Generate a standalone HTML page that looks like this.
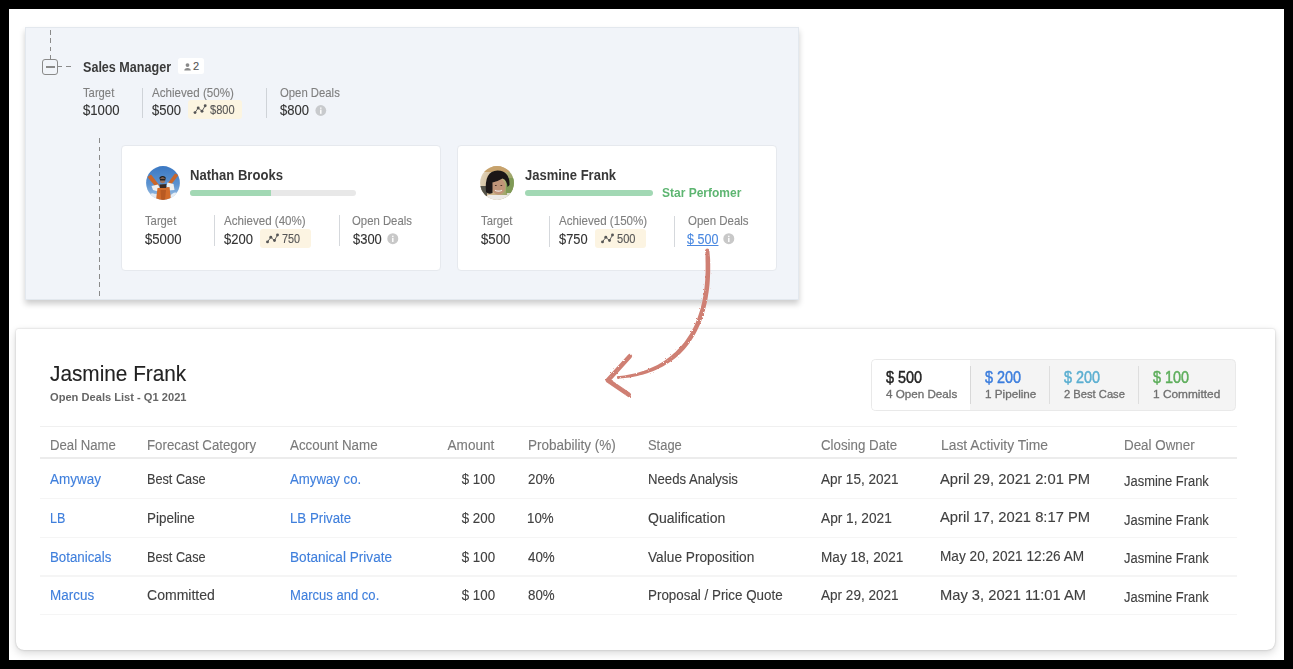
<!DOCTYPE html>
<html><head><meta charset="utf-8"><style>
html,body{margin:0;padding:0;}
body{width:1293px;height:669px;background:#000;position:relative;overflow:hidden;font-family:"Liberation Sans", sans-serif;}
.t{position:absolute;white-space:nowrap;line-height:1;-webkit-text-stroke:0.12px currentColor;}
.a{position:absolute;box-sizing:border-box;}

</style></head><body>
<div class="a" style="left:9px;top:9px;width:1275px;height:651px;background:#fff;"></div>
<!-- top panel -->
<div class="a" style="left:25px;top:27px;width:774px;height:272.5px;background:#f1f4f9;border:1px solid #e3e8ee;box-shadow:0 4px 6px rgba(0,0,0,0.2);"></div>
<!-- dashed vertical top -->
<div class="a" style="left:49.7px;top:30px;width:1.6px;height:29px;background:repeating-linear-gradient(to bottom,#8a8a8a 0 4.8px,transparent 4.8px 8.3px);"></div>
<!-- minus box -->
<div class="a" style="left:42.3px;top:58.5px;width:16.1px;height:16.2px;border:1.7px solid #8a8a8a;border-radius:3px;"></div>
<div class="a" style="left:46.1px;top:65.9px;width:8.5px;height:1.8px;background:#8a8a8a;"></div>
<div class="a" style="left:58.4px;top:66.1px;width:3.8px;height:1.3px;background:#8a8a8a;"></div>
<div class="a" style="left:66px;top:66.1px;width:5px;height:1.3px;background:#8a8a8a;"></div>
<!-- people badge -->
<div class="a" style="left:178px;top:58.3px;width:26px;height:16px;background:#fff;border-radius:2.5px;"></div>
<svg class="a" style="left:183px;top:61px" width="10" height="11" viewBox="0 0 10 11"><circle cx="4.5" cy="4.1" r="1.9" fill="#8a8a8a"/><path d="M1.3 9.6 Q1.3 6.9 4.5 6.9 Q7.8 6.9 7.8 9.6 Z" fill="#8a8a8a"/></svg>
<!-- separators top -->
<div class="a" style="left:142px;top:87.6px;width:1px;height:30px;background:#cfd3d8;"></div>
<div class="a" style="left:266px;top:87.6px;width:1px;height:30px;background:#cfd3d8;"></div>
<div class="a" style="left:188.4px;top:100.3px;width:53.4px;height:19.2px;background:#fcf5e1;border-radius:3px;"></div>
<svg class="a" style="left:193px;top:103px" width="15" height="13" viewBox="0 0 15 13"><polyline points="2,9.6 5.2,5 9,8.2 12.2,2.8" fill="none" stroke="#555" stroke-width="0.9"/><circle cx="2" cy="9.6" r="1.45" fill="#555"/><circle cx="5.2" cy="5" r="1.45" fill="#555"/><circle cx="9" cy="8.2" r="1.45" fill="#555"/><circle cx="12.2" cy="2.8" r="1.45" fill="#555"/></svg>
<svg class="a" style="left:315px;top:105px" width="12" height="12" viewBox="0 0 12 12"><circle cx="5.8" cy="5.5" r="5.4" fill="#c8cacd"/><rect x="5.1" y="2.5" width="1.4" height="1.3" fill="#fff"/><rect x="5.1" y="4.6" width="1.4" height="4.2" fill="#fff"/></svg>
<!-- dashed vertical 2 -->
<div class="a" style="left:98.8px;top:138px;width:1.5px;height:161px;background:repeating-linear-gradient(to bottom,#8a8a8a 0 4.5px,transparent 4.5px 8.5px);"></div>
<!-- cards -->
<div class="a" style="left:121px;top:144.7px;width:320px;height:126px;background:#fff;border:1px solid #e6e9ee;border-radius:4px;"></div>
<div class="a" style="left:456.5px;top:144.7px;width:320px;height:126px;background:#fff;border:1px solid #e6e9ee;border-radius:4px;"></div>
<!-- Nathan avatar -->
<svg class="a" style="left:146px;top:166px" width="34" height="34" viewBox="0 0 34 34">
<defs><clipPath id="c1"><circle cx="17" cy="17" r="16.9"/></clipPath>
<linearGradient id="sky" x1="0" y1="0" x2="0" y2="1"><stop offset="0" stop-color="#3b78c3"/><stop offset="0.55" stop-color="#5c93d0"/><stop offset="1" stop-color="#a9c8e6"/></linearGradient>
<filter id="bl1" x="-20%" y="-20%" width="140%" height="140%"><feGaussianBlur stdDeviation="0.55"/></filter></defs>
<g clip-path="url(#c1)">
<rect width="34" height="34" fill="url(#sky)"/>
<g filter="url(#bl1)">
<path d="M1 30 Q5 26 9 28 Q11 27 13 30 L13 34 L0 34Z" fill="#e3ebf3"/>
<path d="M24 30 Q28 25 31 27 L34 29 L34 34 L23 34Z" fill="#e6eef5"/>
<path d="M1.5 11 L5 8.5 L13.5 19.5 L10.5 22 Z" fill="#c8662b"/>
<path d="M32.5 9 L29 7.5 L21.5 17.5 L24.5 19.5 Z" fill="#c8662b"/>
<path d="M5.5 20 L12 18.5 L14 22.5 L12 25.5 L7 24Z" fill="#eef0f0"/>
<path d="M21.5 16.5 L27.5 18 L28.5 24 L22.5 24.5 L20.5 19.5Z" fill="#eef0f0"/>
<path d="M11.5 22 L23.5 21 L25 34 L10 34Z" fill="#d26c2c"/>
<path d="M14.5 24 L20 24 L19 34 L15 34Z" fill="#b85a24"/>
<path d="M13.5 18.5 L20.5 18 L20 22 L14 22Z" fill="#3b2c24"/>
<ellipse cx="16.6" cy="14" rx="2.7" ry="3.2" fill="#9c7562"/>
<path d="M13.6 13.5 Q16.6 9 19.6 13.5 L19.6 11.2 Q16.6 9 13.6 11.2Z" fill="#241f1c"/>
<rect x="14" y="12.8" width="5.3" height="1.6" rx="0.5" fill="#222"/>
</g>
</g></svg>
<!-- Jasmine avatar -->
<svg class="a" style="left:480.3px;top:166.2px" width="34" height="34" viewBox="0 0 34 34">
<defs><clipPath id="c2"><circle cx="17" cy="17" r="16.9"/></clipPath>
<linearGradient id="jbg" x1="0" y1="0" x2="1" y2="0.3"><stop offset="0" stop-color="#e3d8c4"/><stop offset="0.6" stop-color="#cdb287"/><stop offset="1" stop-color="#93a262"/></linearGradient>
<filter id="bl2" x="-20%" y="-20%" width="140%" height="140%"><feGaussianBlur stdDeviation="0.6"/></filter></defs>
<g clip-path="url(#c2)">
<rect width="34" height="34" fill="url(#jbg)"/>
<g filter="url(#bl2)">
<rect x="0" y="0" width="34" height="6" fill="#c7a26c"/>
<rect x="26" y="12" width="8" height="15" fill="#7f9a56"/>
<rect x="27" y="27" width="7" height="7" fill="#dcdcd2"/>
<rect x="0" y="20" width="7" height="10" fill="#55524a"/>
<path d="M4 34 L8 29 L27 29 L31 34Z" fill="#ece9e6"/>
<ellipse cx="18.5" cy="20.5" rx="6.8" ry="8.3" fill="#c09478"/>
<path d="M6 26 Q4 5 17.5 4.5 Q30 5 29.5 19 L27.5 21 Q27 14 22.5 12.5 Q17.5 15.5 12.5 16.5 L12.5 27 Q8.5 29 6 26Z" fill="#1a1818"/>
<path d="M15 24.2 Q18.5 26 22 24.2" stroke="#efe6e0" stroke-width="1.1" fill="none"/>
<ellipse cx="15.8" cy="19.5" rx="1" ry="0.55" fill="#3a2a22"/>
<ellipse cx="21.3" cy="19.5" rx="1" ry="0.55" fill="#3a2a22"/>
</g>
</g></svg>
<!-- progress bars -->
<div class="a" style="left:190px;top:190.1px;width:166px;height:5.7px;background:#e8e8e8;border-radius:3px;overflow:hidden;"><div style="width:81px;height:100%;background:#a2d8b4;"></div></div>
<div class="a" style="left:524.6px;top:190.3px;width:128.4px;height:5.7px;background:#a2d8b4;border-radius:3px;"></div>
<!-- Nathan separators & badge -->
<div class="a" style="left:214.3px;top:215px;width:1px;height:31px;background:#d5d8dc;"></div>
<div class="a" style="left:339px;top:215px;width:1px;height:31px;background:#d5d8dc;"></div>
<div class="a" style="left:260.1px;top:228.5px;width:50.8px;height:19.2px;background:#fcf4e2;border-radius:3px;"></div>
<svg class="a" style="left:265px;top:232px" width="15" height="13" viewBox="0 0 15 13"><polyline points="2.5,9.9 5.8,5.3 9.5,8.5 12.5,3" fill="none" stroke="#555" stroke-width="0.9"/><circle cx="2.5" cy="9.9" r="1.45" fill="#555"/><circle cx="5.8" cy="5.3" r="1.45" fill="#555"/><circle cx="9.5" cy="8.5" r="1.45" fill="#555"/><circle cx="12.5" cy="3" r="1.45" fill="#555"/></svg>
<svg class="a" style="left:387.3px;top:232.7px" width="12" height="12" viewBox="0 0 12 12"><circle cx="5.8" cy="5.7" r="5.5" fill="#c8c8c8"/><rect x="5.1" y="2.7" width="1.4" height="1.3" fill="#fff"/><rect x="5.1" y="4.8" width="1.4" height="4.2" fill="#fff"/></svg>
<!-- Jasmine separators & badge -->
<div class="a" style="left:549.2px;top:215.5px;width:1px;height:31px;background:#d5d8dc;"></div>
<div class="a" style="left:674px;top:215.5px;width:1px;height:31px;background:#d5d8dc;"></div>
<div class="a" style="left:595.1px;top:228.5px;width:51px;height:19.2px;background:#fcf4e2;border-radius:3px;"></div>
<svg class="a" style="left:600px;top:232px" width="15" height="13" viewBox="0 0 15 13"><polyline points="2.5,9.9 5.8,5.3 9.5,8.5 12.5,3" fill="none" stroke="#555" stroke-width="0.9"/><circle cx="2.5" cy="9.9" r="1.45" fill="#555"/><circle cx="5.8" cy="5.3" r="1.45" fill="#555"/><circle cx="9.5" cy="8.5" r="1.45" fill="#555"/><circle cx="12.5" cy="3" r="1.45" fill="#555"/></svg>
<svg class="a" style="left:722.5px;top:232.7px" width="12" height="12" viewBox="0 0 12 12"><circle cx="5.8" cy="5.7" r="5.5" fill="#c8c8c8"/><rect x="5.1" y="2.7" width="1.4" height="1.3" fill="#fff"/><rect x="5.1" y="4.8" width="1.4" height="4.2" fill="#fff"/></svg>
<!-- bottom card -->
<div class="a" style="left:16px;top:329px;width:1259px;height:321.2px;background:#fff;border-radius:2px 2px 8px 8px;box-shadow:0 0 2px rgba(0,0,0,0.22),0 3px 8px rgba(0,0,0,0.16);"></div>
<!-- summary box -->
<div class="a" style="left:871px;top:359px;width:365px;height:52px;background:#f4f4f4;border:1.8px solid #e9e9e9;border-radius:4.5px;overflow:hidden;"><div style="width:98px;height:100%;background:#fff;"></div></div>
<div class="a" style="left:970.2px;top:365.5px;width:1.2px;height:38px;background:#d8d8d8;"></div>
<div class="a" style="left:1049px;top:365.5px;width:1px;height:38px;background:#dedede;"></div>
<div class="a" style="left:1138px;top:365.5px;width:1px;height:38px;background:#dedede;"></div>
<!-- table lines -->
<div class="a" style="left:40px;top:425.8px;width:1197px;height:1.7px;background:#f0f0f0;"></div>
<div class="a" style="left:40px;top:457.3px;width:1197px;height:2.2px;background:#ececec;"></div>
<div class="a" style="left:40px;top:497.7px;width:1197px;height:1.5px;background:#f5f5f5;"></div>
<div class="a" style="left:40px;top:536.5px;width:1197px;height:1.5px;background:#f5f5f5;"></div>
<div class="a" style="left:40px;top:575px;width:1197px;height:1.5px;background:#f5f5f5;"></div>
<div class="a" style="left:40px;top:613.5px;width:1197px;height:1.5px;background:#f5f5f5;"></div>
<!-- arrow -->
<svg class="a" style="left:0;top:0" width="1293" height="669" viewBox="0 0 1293 669"><defs><filter id="rough" x="-10%" y="-10%" width="120%" height="120%"><feTurbulence type="fractalNoise" baseFrequency="0.6" numOctaves="2" seed="5"/><feDisplacementMap in="SourceGraphic" scale="2.4"/></filter></defs><g filter="url(#rough)" fill="#cf7f73"><circle cx="707.3" cy="250.5" r="2"/><path d="M705.3 250.1 L705.5 254.7 L705.5 259.2 L705.6 263.6 L705.6 267.9 L705.6 272.1 L705.4 276.1 L705.2 280.1 L704.9 284.0 L704.5 287.8 L704.0 291.4 L703.5 295.0 L702.9 298.5 L702.2 301.9 L701.4 305.2 L700.6 308.4 L699.7 311.6 L698.7 314.6 L697.7 317.6 L696.6 320.4 L695.5 323.2 L694.3 325.9 L693.0 328.5 L691.6 331.0 L690.3 333.4 L688.8 335.8 L687.3 338.1 L685.8 340.3 L684.2 342.4 L682.5 344.4 L680.8 346.4 L679.1 348.3 L677.3 350.1 L675.5 351.9 L673.6 353.6 L671.7 355.3 L669.8 356.8 L667.8 358.3 L665.8 359.8 L663.8 361.2 L661.7 362.5 L659.5 363.7 L657.4 364.9 L655.2 366.1 L653.0 367.1 L650.7 368.1 L648.5 369.1 L646.1 370.0 L643.8 370.8 L641.5 371.6 L639.1 372.3 L636.7 372.9 L634.3 373.5 L631.8 374.1 L629.4 374.6 L626.9 375.0 L624.4 375.4 L621.9 375.8 L619.4 376.1 L616.9 376.3 L617.1 378.7 L619.7 378.5 L622.2 378.3 L624.8 378.1 L627.3 377.7 L629.9 377.4 L632.4 376.9 L634.9 376.5 L637.4 375.9 L639.9 375.3 L642.4 374.7 L644.8 373.9 L647.3 373.2 L649.7 372.3 L652.1 371.4 L654.5 370.5 L656.8 369.4 L659.1 368.3 L661.4 367.2 L663.7 365.9 L665.9 364.6 L668.1 363.2 L670.3 361.8 L672.4 360.3 L674.5 358.7 L676.6 357.0 L678.6 355.2 L680.5 353.4 L682.4 351.5 L684.3 349.5 L686.0 347.4 L687.8 345.2 L689.5 343.0 L691.1 340.7 L692.7 338.3 L694.2 335.8 L695.7 333.2 L697.1 330.6 L698.4 327.8 L699.7 325.0 L700.9 322.1 L702.0 319.1 L703.1 316.1 L704.1 312.9 L705.0 309.7 L705.9 306.3 L706.7 302.9 L707.4 299.4 L708.0 295.8 L708.6 292.1 L709.1 288.3 L709.5 284.4 L709.8 280.4 L710.0 276.3 L710.2 272.2 L710.2 267.9 L710.2 263.5 L710.1 259.1 L709.7 254.5 L709.3 249.9Z"/><path d="M629.8 356.3 L607.8 380.4 L628.7 394.7" fill="none" stroke="#cf7f73" stroke-width="4.6" stroke-linecap="round" stroke-linejoin="round"/></g></svg>

<span id="t0" class="t" style="top:60.35px;font-size:14px;color:#3a3a3a;font-weight:700;-webkit-text-stroke:0;transform:scaleX(0.8980);transform-origin:left center;left:83.00px;">Sales Manager</span>
<span id="t1" class="t" style="top:61.49px;font-size:11px;color:#555;left:193.12px;">2</span>
<span id="t2" class="t" style="top:85.50px;font-size:13px;color:#7f7f7f;transform:scaleX(0.8649);transform-origin:left center;left:83.00px;">Target</span>
<span id="t3" class="t" style="top:103.25px;font-size:14px;color:#333333;transform:scaleX(0.9387);transform-origin:left center;left:83.00px;">$1000</span>
<span id="t4" class="t" style="top:85.50px;font-size:13px;color:#7f7f7f;transform:scaleX(0.8914);transform-origin:left center;left:152.04px;">Achieved (50%)</span>
<span id="t5" class="t" style="top:103.25px;font-size:14px;color:#333333;transform:scaleX(0.9295);transform-origin:left center;left:152.04px;">$500</span>
<span id="t6" class="t" style="top:104.44px;font-size:12px;color:#555;transform:scaleX(0.9191);transform-origin:left center;left:209.96px;">$800</span>
<span id="t7" class="t" style="top:85.50px;font-size:13px;color:#7f7f7f;transform:scaleX(0.8709);transform-origin:left center;left:279.54px;">Open Deals</span>
<span id="t8" class="t" style="top:103.25px;font-size:14px;color:#333333;transform:scaleX(0.9295);transform-origin:left center;left:279.54px;">$800</span>
<span id="t9" class="t" style="top:168.15px;font-size:14px;color:#383838;font-weight:700;-webkit-text-stroke:0;transform:scaleX(0.9334);transform-origin:left center;left:190.00px;">Nathan Brooks</span>
<span id="t10" class="t" style="top:214.20px;font-size:13px;color:#7f7f7f;transform:scaleX(0.8649);transform-origin:left center;left:145.00px;">Target</span>
<span id="t11" class="t" style="top:231.85px;font-size:14px;color:#333333;transform:scaleX(0.9387);transform-origin:left center;left:145.00px;">$5000</span>
<span id="t12" class="t" style="top:214.20px;font-size:13px;color:#7f7f7f;transform:scaleX(0.8902);transform-origin:left center;left:223.58px;">Achieved (40%)</span>
<span id="t13" class="t" style="top:231.85px;font-size:14px;color:#333333;transform:scaleX(0.9295);transform-origin:left center;left:223.58px;">$200</span>
<span id="t14" class="t" style="top:232.94px;font-size:12px;color:#555;transform:scaleX(0.9013);transform-origin:left center;left:282.08px;">750</span>
<span id="t15" class="t" style="top:214.20px;font-size:13px;color:#7f7f7f;transform:scaleX(0.8725);transform-origin:left center;left:352.04px;">Open Deals</span>
<span id="t16" class="t" style="top:231.85px;font-size:14px;color:#333333;transform:scaleX(0.9234);transform-origin:left center;left:352.54px;">$300</span>
<span id="t17" class="t" style="top:168.15px;font-size:14px;color:#383838;font-weight:700;-webkit-text-stroke:0;transform:scaleX(0.9286);transform-origin:left center;left:524.92px;">Jasmine Frank</span>
<span id="t18" class="t" style="top:185.80px;font-size:13px;color:#5db571;font-weight:700;-webkit-text-stroke:0;transform:scaleX(0.9225);transform-origin:left center;left:662.08px;">Star Perfomer</span>
<span id="t19" class="t" style="top:214.20px;font-size:13px;color:#7f7f7f;transform:scaleX(0.8669);transform-origin:left center;left:480.96px;">Target</span>
<span id="t20" class="t" style="top:231.85px;font-size:14px;color:#333333;transform:scaleX(0.9422);transform-origin:left center;left:481.00px;">$500</span>
<span id="t21" class="t" style="top:214.20px;font-size:13px;color:#7f7f7f;transform:scaleX(0.8909);transform-origin:left center;left:559.46px;">Achieved (150%)</span>
<span id="t22" class="t" style="top:231.85px;font-size:14px;color:#333333;transform:scaleX(0.9188);transform-origin:left center;left:559.46px;">$750</span>
<span id="t23" class="t" style="top:232.94px;font-size:12px;color:#555;transform:scaleX(0.9217);transform-origin:left center;left:616.58px;">500</span>
<span id="t24" class="t" style="top:214.20px;font-size:13px;color:#7f7f7f;transform:scaleX(0.8825);transform-origin:left center;left:687.92px;">Open Deals</span>
<span id="t25" class="t" style="top:231.85px;font-size:14px;color:#4a88e0;transform:scaleX(0.8977);transform-origin:left center;left:686.58px;text-decoration:underline;">$ 500</span>
<span id="t26" class="t" style="top:362.78px;font-size:22px;color:#222;transform:scaleX(0.9444);transform-origin:left center;left:49.92px;">Jasmine Frank</span>
<span id="t27" class="t" style="top:392.39px;font-size:11px;color:#666;font-weight:700;-webkit-text-stroke:0;transform:scaleX(1.0103);transform-origin:left center;left:49.92px;">Open Deals List - Q1 2021</span>
<span id="t28" class="t" style="top:369.96px;font-size:16px;color:#222;transform:scaleX(0.9028);transform-origin:left center;left:886.46px;-webkit-text-stroke:0.45px currentColor;">$ 500</span>
<span id="t29" class="t" style="top:388.69px;font-size:11px;color:#6f6f6f;transform:scaleX(1.0592);transform-origin:left center;left:886.46px;-webkit-text-stroke:0.3px currentColor;">4 Open Deals</span>
<span id="t30" class="t" style="top:369.96px;font-size:16px;color:#3b7ddd;transform:scaleX(0.9003);transform-origin:left center;left:985.00px;-webkit-text-stroke:0.45px currentColor;">$ 200</span>
<span id="t31" class="t" style="top:388.69px;font-size:11px;color:#6f6f6f;transform:scaleX(1.0625);transform-origin:left center;left:985.00px;-webkit-text-stroke:0.3px currentColor;">1 Pipeline</span>
<span id="t32" class="t" style="top:369.96px;font-size:16px;color:#5aaed0;transform:scaleX(0.9003);transform-origin:left center;left:1064.00px;-webkit-text-stroke:0.45px currentColor;">$ 200</span>
<span id="t33" class="t" style="top:388.69px;font-size:11px;color:#6f6f6f;transform:scaleX(1.0167);transform-origin:left center;left:1064.00px;-webkit-text-stroke:0.3px currentColor;">2 Best Case</span>
<span id="t34" class="t" style="top:369.96px;font-size:16px;color:#5cad5a;transform:scaleX(0.9003);transform-origin:left center;left:1152.58px;-webkit-text-stroke:0.45px currentColor;">$ 100</span>
<span id="t35" class="t" style="top:388.69px;font-size:11px;color:#6f6f6f;transform:scaleX(1.0795);transform-origin:left center;left:1152.58px;-webkit-text-stroke:0.3px currentColor;">1 Committed</span>
<span id="t36" class="t" style="top:438.25px;font-size:14px;color:#7a7a7a;transform:scaleX(0.9401);transform-origin:left center;left:49.54px;">Deal Name</span>
<span id="t37" class="t" style="top:438.25px;font-size:14px;color:#7a7a7a;transform:scaleX(0.9479);transform-origin:left center;left:147.08px;">Forecast Category</span>
<span id="t38" class="t" style="top:438.25px;font-size:14px;color:#7a7a7a;transform:scaleX(0.9539);transform-origin:left center;left:289.54px;">Account Name</span>
<span id="t39" class="t" style="top:438.25px;font-size:14px;color:#7a7a7a;transform:scaleX(0.9675);transform-origin:right center;right:798.30px;">Amount</span>
<span id="t40" class="t" style="top:438.25px;font-size:14px;color:#7a7a7a;transform:scaleX(0.9645);transform-origin:left center;left:528.08px;">Probability (%)</span>
<span id="t41" class="t" style="top:438.25px;font-size:14px;color:#7a7a7a;transform:scaleX(0.9225);transform-origin:left center;left:647.54px;">Stage</span>
<span id="t42" class="t" style="top:438.25px;font-size:14px;color:#7a7a7a;transform:scaleX(0.9501);transform-origin:left center;left:821.46px;">Closing Date</span>
<span id="t43" class="t" style="top:438.25px;font-size:14px;color:#7a7a7a;transform:scaleX(0.9889);transform-origin:left center;left:940.50px;">Last Activity Time</span>
<span id="t44" class="t" style="top:438.25px;font-size:14px;color:#7a7a7a;transform:scaleX(0.9568);transform-origin:left center;left:1123.54px;">Deal Owner</span>
<span id="t45" class="t" style="top:472.35px;font-size:14px;color:#3f7fdc;transform:scaleX(0.9623);transform-origin:left center;left:49.54px;">Amyway</span>
<span id="t46" class="t" style="top:472.35px;font-size:14px;color:#404040;transform:scaleX(0.9064);transform-origin:left center;left:147.08px;">Best Case</span>
<span id="t47" class="t" style="top:472.35px;font-size:14px;color:#3f7fdc;transform:scaleX(0.9435);transform-origin:left center;left:289.54px;">Amyway co.</span>
<span id="t48" class="t" style="top:472.35px;font-size:14px;color:#404040;transform:scaleX(0.9513);transform-origin:right center;right:797.50px;">$ 100</span>
<span id="t49" class="t" style="top:472.35px;font-size:14px;color:#404040;transform:scaleX(0.9505);transform-origin:left center;left:528.08px;">20%</span>
<span id="t50" class="t" style="top:472.35px;font-size:14px;color:#404040;transform:scaleX(0.9396);transform-origin:left center;left:647.54px;">Needs Analysis</span>
<span id="t51" class="t" style="top:472.35px;font-size:14px;color:#404040;transform:scaleX(0.9676);transform-origin:left center;left:821.46px;">Apr 15, 2021</span>
<span id="t52" class="t" style="top:471.73px;font-size:14.5px;color:#404040;transform:scaleX(1.0176);transform-origin:left center;left:940.46px;">April 29, 2021 2:01 PM</span>
<span id="t53" class="t" style="top:473.95px;font-size:14px;color:#404040;transform:scaleX(0.9239);transform-origin:left center;left:1124.00px;">Jasmine Frank</span>
<span id="t54" class="t" style="top:511.05px;font-size:14px;color:#3f7fdc;transform:scaleX(0.8954);transform-origin:left center;left:49.54px;">LB</span>
<span id="t55" class="t" style="top:511.05px;font-size:14px;color:#404040;transform:scaleX(0.9594);transform-origin:left center;left:147.08px;">Pipeline</span>
<span id="t56" class="t" style="top:511.05px;font-size:14px;color:#3f7fdc;transform:scaleX(0.9471);transform-origin:left center;left:289.54px;">LB Private</span>
<span id="t57" class="t" style="top:511.05px;font-size:14px;color:#404040;transform:scaleX(0.9513);transform-origin:right center;right:797.50px;">$ 200</span>
<span id="t58" class="t" style="top:511.05px;font-size:14px;color:#404040;transform:scaleX(0.9505);transform-origin:left center;left:527.28px;">10%</span>
<span id="t59" class="t" style="top:511.05px;font-size:14px;color:#404040;transform:scaleX(1.0027);transform-origin:left center;left:647.54px;">Qualification</span>
<span id="t60" class="t" style="top:511.05px;font-size:14px;color:#404040;transform:scaleX(0.9778);transform-origin:left center;left:821.46px;">Apr 1, 2021</span>
<span id="t61" class="t" style="top:510.43px;font-size:14.5px;color:#404040;transform:scaleX(1.0176);transform-origin:left center;left:940.46px;">April 17, 2021 8:17 PM</span>
<span id="t62" class="t" style="top:512.65px;font-size:14px;color:#404040;transform:scaleX(0.9239);transform-origin:left center;left:1124.00px;">Jasmine Frank</span>
<span id="t63" class="t" style="top:549.75px;font-size:14px;color:#3f7fdc;transform:scaleX(0.9501);transform-origin:left center;left:49.54px;">Botanicals</span>
<span id="t64" class="t" style="top:549.75px;font-size:14px;color:#404040;transform:scaleX(0.9064);transform-origin:left center;left:147.08px;">Best Case</span>
<span id="t65" class="t" style="top:549.75px;font-size:14px;color:#3f7fdc;transform:scaleX(0.9714);transform-origin:left center;left:289.54px;">Botanical Private</span>
<span id="t66" class="t" style="top:549.75px;font-size:14px;color:#404040;transform:scaleX(0.9513);transform-origin:right center;right:797.50px;">$ 100</span>
<span id="t67" class="t" style="top:549.75px;font-size:14px;color:#404040;transform:scaleX(0.9530);transform-origin:left center;left:528.08px;">40%</span>
<span id="t68" class="t" style="top:549.75px;font-size:14px;color:#404040;transform:scaleX(0.9779);transform-origin:left center;left:647.54px;">Value Proposition</span>
<span id="t69" class="t" style="top:549.75px;font-size:14px;color:#404040;transform:scaleX(0.9714);transform-origin:left center;left:821.46px;">May 18, 2021</span>
<span id="t70" class="t" style="top:549.13px;font-size:14.5px;color:#404040;transform:scaleX(0.9408);transform-origin:left center;left:940.46px;">May 20, 2021 12:26 AM</span>
<span id="t71" class="t" style="top:551.35px;font-size:14px;color:#404040;transform:scaleX(0.9239);transform-origin:left center;left:1124.00px;">Jasmine Frank</span>
<span id="t72" class="t" style="top:588.45px;font-size:14px;color:#3f7fdc;transform:scaleX(0.9610);transform-origin:left center;left:49.54px;">Marcus</span>
<span id="t73" class="t" style="top:588.45px;font-size:14px;color:#404040;transform:scaleX(1.0031);transform-origin:left center;left:147.08px;">Committed</span>
<span id="t74" class="t" style="top:588.45px;font-size:14px;color:#3f7fdc;transform:scaleX(0.9326);transform-origin:left center;left:289.54px;">Marcus and co.</span>
<span id="t75" class="t" style="top:588.45px;font-size:14px;color:#404040;transform:scaleX(0.9513);transform-origin:right center;right:797.50px;">$ 100</span>
<span id="t76" class="t" style="top:588.45px;font-size:14px;color:#404040;transform:scaleX(0.9505);transform-origin:left center;left:528.08px;">80%</span>
<span id="t77" class="t" style="top:588.45px;font-size:14px;color:#404040;transform:scaleX(0.9557);transform-origin:left center;left:647.54px;">Proposal / Price Quote</span>
<span id="t78" class="t" style="top:588.45px;font-size:14px;color:#404040;transform:scaleX(0.9676);transform-origin:left center;left:821.46px;">Apr 29, 2021</span>
<span id="t79" class="t" style="top:587.83px;font-size:14.5px;color:#404040;transform:scaleX(1.0140);transform-origin:left center;left:940.46px;">May 3, 2021 11:01 AM</span>
<span id="t80" class="t" style="top:590.05px;font-size:14px;color:#404040;transform:scaleX(0.9239);transform-origin:left center;left:1124.00px;">Jasmine Frank</span>
</body></html>
